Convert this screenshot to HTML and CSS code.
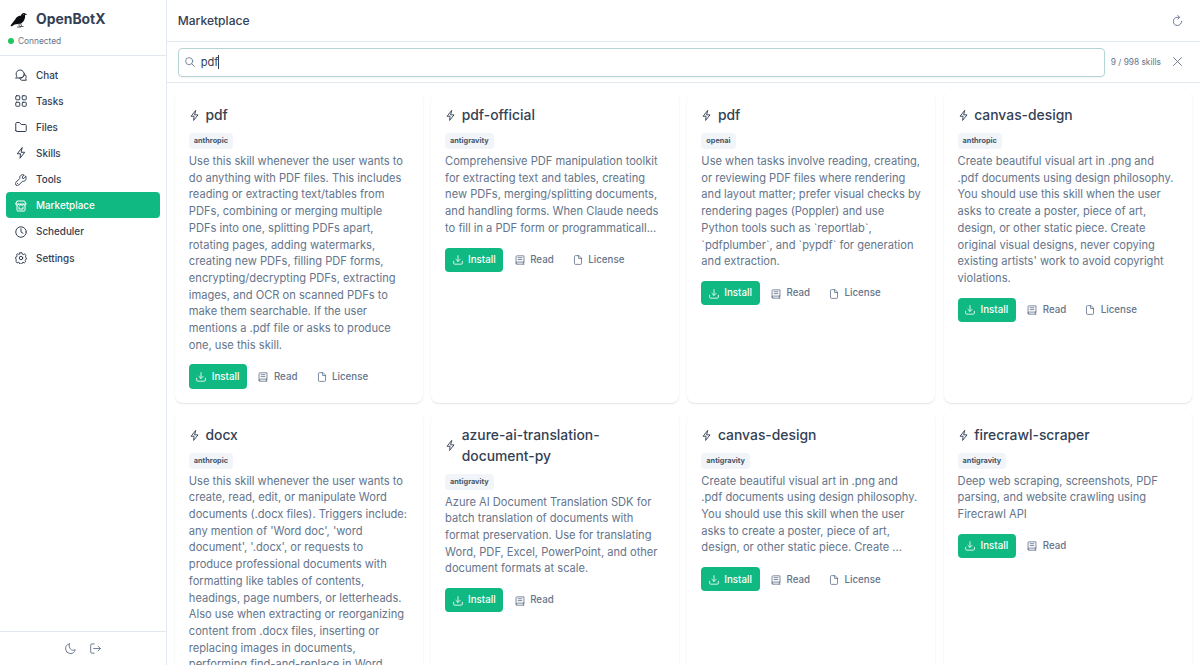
FILE: index.html
```html
<!DOCTYPE html>
<html lang="en">
	<head>
		<meta charset="UTF-8">
		<meta name="viewport" content="width=device-width, initial-scale=1">
		<title>OpenBotX - Marketplace</title>
		<link rel="stylesheet" href="styles.css">
	</head>
	<body>
		<!-- icons -->
		<svg class="sprite" xmlns="http://www.w3.org/2000/svg">
			<symbol id="chat" viewBox="0 0 24 24"><path d="M2 17.5c1.500-1 1.500-2 1-4A8 8 0 1 1 11 18H2Z"/><path d="M19 10c3.500 2.500 4 6 2.500 9l1 3.500H14c-2 0-3.500-1-4.500-4.500M19 10c0 4.500-3 8-8 8"/></symbol>
			<symbol id="tasks" viewBox="0 0 24 24"><rect x="1.5" y="1.5" width="8" height="8" rx="1.5"/><rect x="14.5" y="1.5" width="8" height="8" rx="1.5"/><rect x="1.5" y="14.5" width="8" height="8" rx="1.5"/><rect x="14.5" y="14.5" width="8" height="8" rx="1.5"/></symbol>
			<symbol id="folder" viewBox="0 0 24 24"><path d="M1.500 19V5a2 2 0 0 1 2-2h5.500l3.500 4h8a2 2 0 0 1 2 2v10a2 2 0 0 1-2 2h-17a2 2 0 0 1-2-2Z"/></symbol>
			<symbol id="bolt" viewBox="0 0 24 24"><path d="M14 1.500 4.500 13.500H11L10 22.500 19.500 10.500H13Z"/></symbol>
			<symbol id="wrench" viewBox="0 0 24 24"><path d="M21.500 5 17.500 9l-2.500-.5-.5-2.500L18.500 2C13 0 8.500 4 9.500 9L2 16.500a3.800 3.800 0 0 0 5.500 5.500L15 14.500c5.500 1 9-4 6.500-9.500ZM5 19h.1"/></symbol>
			<symbol id="shop" viewBox="0 0 24 24"><path d="M5 2h14l3 6H2ZM2 8c0 4 5 4 5 0 0 4 5 4 5 0 0 4 5 4 5 0 0 4 5 4 5 0M4 11v9.500a1.500 1.500 0 0 0 1.500 1.500h13a1.500 1.500 0 0 0 1.500-1.500V11M8 14v4h8v-4"/></symbol>
			<symbol id="clock" viewBox="0 0 24 24"><circle cx="12" cy="12" r="10.5"/><path d="M12 5.500V12l4 2.500"/></symbol>
			<symbol id="cog" viewBox="0 0 24 24"><path d="M10 1.500h4l1 3 1.500.6L19.300 4 22 6.700 20.900 9.500l.6 1.500 1 .5v3l-1.500.7-.6 1.500.9 2.600-2.500 2.400-2.800-1-1.500.7-1 2.600h-4l-1-2.800-1.500-.6-2.800 1-2.500-2.400 1-2.800-.6-1.500L1.500 14v-4l2.100-.8.6-1.500L3.100 5 5.300 3.400l2.200 1.500L9 4.300Z"/><circle cx="12" cy="12" r="3.5"/></symbol>
			<symbol id="moon" viewBox="0 0 24 24"><path d="M9.500 2A10.500 10.500 0 1 0 22 14.500C15 18.500 6.500 11.500 9.500 2Z"/></symbol>
			<symbol id="sign-out" viewBox="0 0 24 24"><path d="M9 22H4a2.500 2.500 0 0 1-2.500-2.500v-15A2.500 2.500 0 0 1 4 2h5M8 12h14.500M17.500 7l5 5-5 5"/></symbol>
			<symbol id="refresh" viewBox="0 0 24 24"><path d="M16 5h-4a8.800 8.800 0 1 0 8.800 8.800M12.500 1l4 4-4 4"/></symbol>
			<symbol id="search" viewBox="0 0 24 24"><circle cx="10" cy="10" r="8.5"/><path d="m16.500 16.500 6 6"/></symbol>
			<symbol id="times" viewBox="0 0 24 24"><path d="m3.500 3.500 17 17m0-17-17 17"/></symbol>
			<symbol id="download" viewBox="0 0 24 24"><path d="M12 1.500V15M7 10.500l5 5 5-5M1.500 15v4.500A2.500 2.500 0 0 0 4 22h16a2.500 2.500 0 0 0 2.500-2.500V15"/></symbol>
			<symbol id="book" viewBox="0 0 24 24"><path d="M21.500 17V2H5a2.500 2.500 0 0 0-2.500 2.500v15A2.500 2.500 0 0 0 5 22h16.500M21.500 17H5a2.500 2.500 0 0 0 0 5M20 17v5M7.500 6.500h9M7.500 11h9"/></symbol>
			<symbol id="file" viewBox="0 0 24 24"><path d="M13.500 1.500H6A2.500 2.500 0 0 0 3.500 4v16A2.500 2.500 0 0 0 6 22.500h12a2.500 2.500 0 0 0 2.500-2.500V8.500ZM13.500 1.500v7h7"/></symbol>
		</svg>

		<div class="app">
			<aside class="sidebar">
				<div class="brand">
					<div class="brand-name">
						<svg class="logo" viewBox="0 0 36 32">
							<path class="bird" d="M1 27 11 14C14 8 19 8 22 7c1-4 5-6 8-4l5 1.500-5 1.500c1 6-2 14-8 17l-6 1-7 1-6 4Z"/>
							<path class="leg" d="M17 22l2 7m-5 1h8m-1-8 2 6m-3 1h7"/>
							<circle class="eye" cx="27.5" cy="5" r=".8"/>
						</svg>
						<span>OpenBotX</span>
					</div>
					<div class="status"><i class="dot"></i>Connected</div>
				</div>
				<nav class="menu">
					<a class="menu-item"><svg class="icon"><use href="#chat"/></svg>Chat</a>
					<a class="menu-item"><svg class="icon"><use href="#tasks"/></svg>Tasks</a>
					<a class="menu-item"><svg class="icon"><use href="#folder"/></svg>Files</a>
					<a class="menu-item"><svg class="icon"><use href="#bolt"/></svg>Skills</a>
					<a class="menu-item"><svg class="icon"><use href="#wrench"/></svg>Tools</a>
					<a class="menu-item active"><svg class="icon"><use href="#shop"/></svg>Marketplace</a>
					<a class="menu-item"><svg class="icon"><use href="#clock"/></svg>Scheduler</a>
					<a class="menu-item"><svg class="icon"><use href="#cog"/></svg>Settings</a>
				</nav>
				<div class="sidebar-footer">
					<svg class="icon"><use href="#moon"/></svg>
					<svg class="icon"><use href="#sign-out"/></svg>
				</div>
			</aside>

			<main class="main">
				<header class="topbar">
					<h1 class="page-title">Marketplace</h1>
					<svg class="icon"><use href="#refresh"/></svg>
				</header>
				<div class="searchbar">
					<div class="search">
						<svg class="icon"><use href="#search"/></svg>
						<span class="query">pdf</span><span class="caret"></span>
					</div>
					<span class="count">9 / 998 skills</span>
					<svg class="icon"><use href="#times"/></svg>
				</div>

				<div class="grid">
					<article class="card">
						<h2 class="card-title"><svg class="icon"><use href="#bolt"/></svg><span>pdf</span></h2>
						<span class="tag">anthropic</span>
						<p class="desc">Use this skill whenever the user wants to do anything with PDF files. This includes reading or extracting text/tables from PDFs, combining or merging multiple PDFs into one, splitting PDFs apart, rotating pages, adding watermarks, creating new PDFs, filling PDF forms, encrypting/decrypting PDFs, extracting images, and OCR on scanned PDFs to make them searchable. If the user mentions a .pdf file or asks to produce one, use this skill.</p>
						<div class="actions">
							<a class="btn primary"><svg class="icon"><use href="#download"/></svg>Install</a>
							<a class="btn"><svg class="icon"><use href="#book"/></svg>Read</a>
							<a class="btn"><svg class="icon"><use href="#file"/></svg>License</a>
						</div>
					</article>
					<article class="card">
						<h2 class="card-title"><svg class="icon"><use href="#bolt"/></svg><span>pdf-official</span></h2>
						<span class="tag">antigravity</span>
						<p class="desc">Comprehensive PDF manipulation toolkit for extracting text and tables, creating new PDFs, merging/splitting documents, and handling forms. When Claude needs to fill in a PDF form or programmaticall...</p>
						<div class="actions">
							<a class="btn primary"><svg class="icon"><use href="#download"/></svg>Install</a>
							<a class="btn"><svg class="icon"><use href="#book"/></svg>Read</a>
							<a class="btn"><svg class="icon"><use href="#file"/></svg>License</a>
						</div>
					</article>
					<article class="card">
						<h2 class="card-title"><svg class="icon"><use href="#bolt"/></svg><span>pdf</span></h2>
						<span class="tag">openai</span>
						<p class="desc">Use when tasks involve reading, creating, or reviewing PDF files where rendering and layout matter; prefer visual checks by rendering pages (Poppler) and use Python tools such as `reportlab`, `pdfplumber`, and `pypdf` for generation and extraction.</p>
						<div class="actions">
							<a class="btn primary"><svg class="icon"><use href="#download"/></svg>Install</a>
							<a class="btn"><svg class="icon"><use href="#book"/></svg>Read</a>
							<a class="btn"><svg class="icon"><use href="#file"/></svg>License</a>
						</div>
					</article>
					<article class="card">
						<h2 class="card-title"><svg class="icon"><use href="#bolt"/></svg><span>canvas-design</span></h2>
						<span class="tag">anthropic</span>
						<p class="desc">Create beautiful visual art in .png and .pdf documents using design philosophy. You should use this skill when the user asks to create a poster, piece of art, design, or other static piece. Create original visual designs, never copying existing artists' work to avoid copyright violations.</p>
						<div class="actions">
							<a class="btn primary"><svg class="icon"><use href="#download"/></svg>Install</a>
							<a class="btn"><svg class="icon"><use href="#book"/></svg>Read</a>
							<a class="btn"><svg class="icon"><use href="#file"/></svg>License</a>
						</div>
					</article>
					<article class="card">
						<h2 class="card-title"><svg class="icon"><use href="#bolt"/></svg><span>docx</span></h2>
						<span class="tag">anthropic</span>
						<p class="desc">Use this skill whenever the user wants to create, read, edit, or manipulate Word documents (.docx files). Triggers include: any mention of 'Word doc', 'word document', '.docx', or requests to produce professional documents with formatting like tables of contents, headings, page numbers, or letterheads. Also use when extracting or reorganizing content from .docx files, inserting or replacing images in documents, performing find-and-replace in Word</p>
					</article>
					<article class="card">
						<h2 class="card-title"><svg class="icon"><use href="#bolt"/></svg><span>azure-ai-translation-document-py</span></h2>
						<span class="tag">antigravity</span>
						<p class="desc">Azure AI Document Translation SDK for batch translation of documents with format preservation. Use for translating Word, PDF, Excel, PowerPoint, and other document formats at scale.</p>
						<div class="actions">
							<a class="btn primary"><svg class="icon"><use href="#download"/></svg>Install</a>
							<a class="btn"><svg class="icon"><use href="#book"/></svg>Read</a>
						</div>
					</article>
					<article class="card">
						<h2 class="card-title"><svg class="icon"><use href="#bolt"/></svg><span>canvas-design</span></h2>
						<span class="tag">antigravity</span>
						<p class="desc">Create beautiful visual art in .png and .pdf documents using design philosophy. You should use this skill when the user asks to create a poster, piece of art, design, or other static piece. Create ...</p>
						<div class="actions">
							<a class="btn primary"><svg class="icon"><use href="#download"/></svg>Install</a>
							<a class="btn"><svg class="icon"><use href="#book"/></svg>Read</a>
							<a class="btn"><svg class="icon"><use href="#file"/></svg>License</a>
						</div>
					</article>
					<article class="card">
						<h2 class="card-title"><svg class="icon"><use href="#bolt"/></svg><span>firecrawl-scraper</span></h2>
						<span class="tag">antigravity</span>
						<p class="desc">Deep web scraping, screenshots, PDF parsing, and website crawling using Firecrawl API</p>
						<div class="actions">
							<a class="btn primary"><svg class="icon"><use href="#download"/></svg>Install</a>
							<a class="btn"><svg class="icon"><use href="#book"/></svg>Read</a>
						</div>
					</article>
				</div>
			</main>
		</div>
	</body>
</html>
```
FILE: styles.css
```css
html{
	font-size: 11.11px;
}
*{
	box-sizing: border-box;
}
body{
	margin: 0;
	font-family: Inter, "Liberation Sans", sans-serif;
	line-height: 1.5;
	color: #334155;
	background: #fff;
}
.sprite{
	display: none;
}
.icon{
	width: 1rem;
	height: 1rem;
	flex: none;
	fill: none;
	stroke: currentColor;
	stroke-width: 2;
	stroke-linecap: round;
	stroke-linejoin: round;
}
.app{
	display: flex;
	height: 100vh;
	overflow: hidden;
}

/* sidebar */
.sidebar{
	width: 15rem;
	flex: none;
	display: flex;
	flex-direction: column;
	border-right: 1px solid #e2e8f0;
}
.brand{
	height: 56px;
	padding: 9px 8px 0;
	border-bottom: 1px solid #e2e8f0;
}
.brand-name{
	display: flex;
	align-items: center;
	gap: 8px;
	height: 21px;
	padding-left: 2px;
	font-size: 13.9px;
	font-weight: 700;
}
.logo{
	width: 18px;
	height: 16px;
}
.bird{
	fill: #0b0d10;
}
.leg{
	fill: none;
	stroke: #2b2b2b;
	stroke-width: 1.5;
}
.eye{
	fill: #fff;
}
.status{
	display: flex;
	align-items: center;
	gap: 4px;
	margin-top: 4.5px;
	font-size: 8.33px;
	color: #64748b;
}
.dot{
	width: 6px;
	height: 6px;
	border-radius: 50%;
	background: #22c55e;
}
.menu{
	flex: 1;
	padding: 5.5px;
}
.menu-item{
	display: flex;
	align-items: center;
	gap: 9.5px;
	height: 26.15px;
	padding: 1px 0 0 9px;
	border-radius: 4px;
	font-size: 9.9px;
	font-weight: 500;
}
.menu-item .icon{
	width: 12px;
	height: 12px;
}
.active{
	background: #10b981;
	color: #fff;
}
.sidebar-footer{
	display: flex;
	align-items: center;
	justify-content: center;
	gap: 14px;
	height: 34px;
	border-top: 1px solid #e2e8f0;
	color: #64748b;
}

/* header */
.main{
	flex: 1;
	min-width: 0;
}
.topbar{
	display: flex;
	align-items: center;
	justify-content: space-between;
	height: 42px;
	padding: 0 17px 0 11px;
	border-bottom: 1px solid #e2e8f0;
}
.topbar .icon,
.searchbar > .icon{
	color: #64748b;
}
.page-title{
	margin: 0;
	padding-top: 1px;
	font-size: 12.1px;
	font-weight: 500;
}
.searchbar{
	display: flex;
	align-items: center;
	height: 41px;
	padding: 0 17px 0 11px;
	border-bottom: 1px solid #e2e8f0;
}
.search{
	flex: 1;
	display: flex;
	align-items: center;
	height: 29px;
	padding: 0 6px;
	border: 1px solid #b5d5d5;
	border-radius: 4px;
	box-shadow: 0 1px 2px rgba(18, 18, 23, .05);
	font-size: 11.11px;
}
.search .icon{
	margin-right: 6px;
	width: 10px;
	height: 10px;
	color: #64748b;
}
.caret{
	width: 1px;
	height: 14px;
	background: #334155;
}
.count{
	margin: 0 11px 0 6px;
	font-size: 8.33px;
	color: #64748b;
	white-space: nowrap;
}

/* skill cards */
.grid{
	display: grid;
	grid-template-columns: repeat(4, 1fr);
	gap: .75rem;
	padding: .75rem;
}
.card{
	padding: 1.25rem;
	border-radius: 8px;
	background: #fff;
	box-shadow: 0 1px 2px rgba(0, 0, 0, .1), 0 1px 1px -1px rgba(0, 0, 0, .1);
}
.card-title{
	display: flex;
	align-items: center;
	gap: 5.5px;
	margin: 0 0 7px;
	font-size: 1.25rem;
	font-weight: 500;
}
.tag{
	display: block;
	width: fit-content;
	height: 16px;
	padding: 0 5px;
	border-radius: 4px;
	background: #f1f5f9;
	font-size: 7.3px;
	line-height: 16px;
	font-weight: 700;
	color: #475569;
}
.desc{
	margin: 4px 0 11px;
	font-size: 1rem;
	line-height: 16.7px;
	color: #64748b;
}
.actions{
	display: flex;
	gap: 3.5px;
}
.btn{
	display: flex;
	align-items: center;
	gap: 5.5px;
	height: 24.3px;
	padding: 1px 7.8px 0;
	border-radius: 4px;
	font-size: 9.72px;
	font-weight: 500;
	color: #64748b;
}
.btn .icon{
	width: 10px;
	height: 10px;
}
.primary{
	padding-left: 7.5px;
	background: #10b981;
	color: #fff;
}
```
